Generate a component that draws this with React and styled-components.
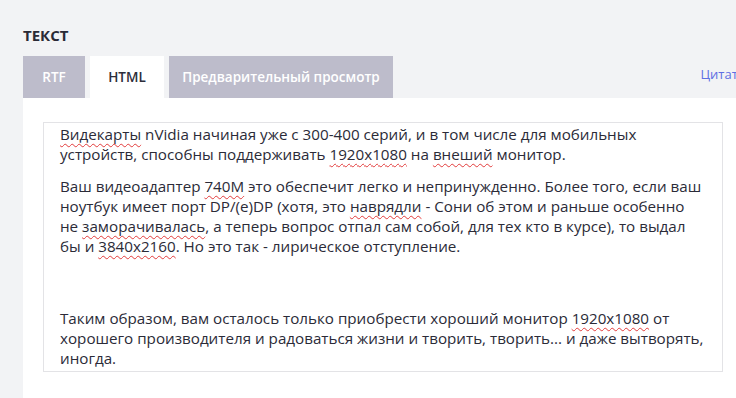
import React from "react";
import styled, { createGlobalStyle } from "styled-components";

const Global = createGlobalStyle`
  html, body {
    margin: 0;
    padding: 0;
    background: #f2f3f5;
    overflow: hidden;
  }
  body {
    font-family: "Open Sans", "Liberation Sans", sans-serif;
  }
`;

const Page = styled.div`
  width: 780px;
  height: 398px;
  padding: 25px 0 0 23px;
  box-sizing: border-box;
  display: flex;
  flex-direction: column;
`;

const Title = styled.h2`
  margin: 0 0 11px;
  font-size: 15px;
  line-height: 20px;
  font-weight: 700;
  color: #2a2a36;
`;

const TabRow = styled.div`
  display: flex;
  gap: 5px;
  height: 42px;
`;

const Tab = styled.div`
  width: ${(p) => p.$w}px;
  display: flex;
  align-items: center;
  justify-content: center;
  font-size: 13.5px;
  font-weight: 600;
  white-space: nowrap;
  background: ${(p) => (p.$active ? "#ffffff" : "#bdbccb")};
  color: ${(p) => (p.$active ? "#2d2d3a" : "#ffffff")};
`;

const QuoteLink = styled.a`
  margin-left: auto;
  margin-right: 35px;
  padding-top: 9px;
  font-size: 13px;
  color: #5f6fe3;
  text-decoration: none;
`;

const Panel = styled.div`
  flex: 1;
  background: #ffffff;
  padding: 24px 0 0 20px;
`;

const Editor = styled.div`
  width: 680px;
  height: 250px;
  box-sizing: border-box;
  border: 1px solid #e3e3e6;
  padding: 1px 18px 0 16px;
  overflow: hidden;
  font-size: 15.2px;
  line-height: 20px;
  color: #2b2b38;
`;

const Para = styled.p`
  margin: 0 0 12px;
`;

const EmptyPara = styled.p`
  margin: 0 0 12px;
  height: 28px;
`;

const Typo = styled.span`
  text-decoration: underline wavy #e23b3b;
  text-decoration-thickness: 1px;
  text-underline-offset: 3px;
  text-decoration-skip-ink: none;
`;

export default function App() {
  return (
    <>
      <Global />
      <Page>
        <Title>ТЕКСТ</Title>
        <TabRow>
          <Tab $w={62}>RTF</Tab>
          <Tab $w={74} $active>HTML</Tab>
          <Tab $w={224}>Предварительный просмотр</Tab>
          <QuoteLink href="#">Цитата</QuoteLink>
        </TabRow>
        <Panel>
          <Editor>
            <Para>
              <Typo>Видекарты</Typo> nVidia начиная уже с 300-400 серий, и в том числе для мобильных
              устройств, способны поддерживать <Typo>1920x1080</Typo> на <Typo>внеший</Typo> монитор.
            </Para>
            <Para>
              Ваш видеоадаптер <Typo>740M</Typo> это обеспечит легко и непринужденно. Более того, если ваш
              ноутбук имеет порт DP/(e)DP (хотя, это <Typo>наврядли</Typo> - Сони об этом и раньше особенно
              не <Typo>заморачивалась</Typo>, а теперь вопрос отпал сам собой, для тех кто в курсе), то выдал
              бы и <Typo>3840x2160</Typo>. Но это так - лирическое отступление.
            </Para>
            <EmptyPara />
            <Para>
              Таким образом, вам осталось только приобрести хороший монитор <Typo>1920x1080</Typo> от
              хорошего производителя и радоваться жизни и творить, творить... и даже вытворять,
              иногда.
            </Para>
          </Editor>
        </Panel>
      </Page>
    </>
  );
}
